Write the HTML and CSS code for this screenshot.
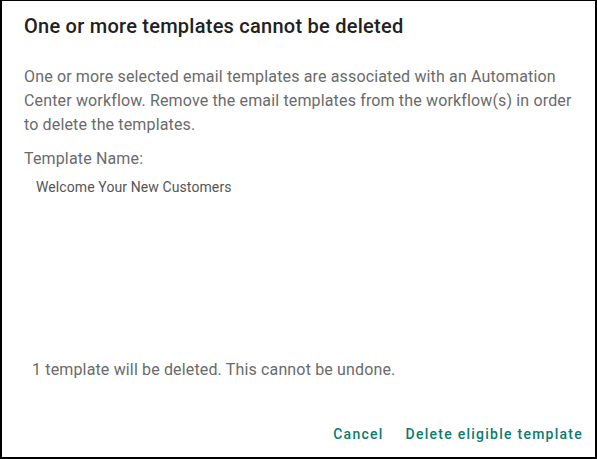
FILE: index.html
```html
<!DOCTYPE html>
<html>
<head>
<meta charset="utf-8">
<link rel="stylesheet" href="styles.css">
</head>
<body>
<div class="dialog">
  <h2 class="title">One or more templates cannot be deleted</h2>
  <div class="content">
    <p class="message">One or more selected email templates are associated with an Automation Center workflow. Remove the email templates from the workflow(s) in order to delete the templates.</p>
    <div class="label">Template Name:</div>
    <ul class="names">
      <li>Welcome Your New Customers</li>
    </ul>
    <div class="note">1 template will be deleted. This cannot be undone.</div>
  </div>
  <div class="actions">
    <button class="btn">Cancel</button>
    <button class="btn">Delete eligible template</button>
  </div>
</div>
</body>
</html>
```

FILE: styles.css
```css
* { box-sizing: border-box; }
html, body { margin: 0; padding: 0; background: #fff; }
body { font-family: Roboto, "Noto Sans", sans-serif; }
.dialog {
  width: 597px;
  height: 459px;
  border: 2px solid #000;
  border-top-width: 1px;
  display: flex;
  flex-direction: column;
}
.title {
  margin: 0;
  padding: 12px 22px 0;
  font-size: 20px;
  font-weight: 500;
  line-height: 26px;
  color: #212121;
  letter-spacing: 0.25px;
}
.content {
  flex: 1;
  padding: 26px 22px 0;
  display: flex;
  flex-direction: column;
}
.message {
  margin: 0;
  font-size: 16px;
  line-height: 24px;
  color: #6a6a6a;
  letter-spacing: 0.15px;
}
.label {
  margin-top: 10px;
  font-size: 16px;
  line-height: 24px;
  color: #6a6a6a;
  letter-spacing: 0.15px;
}
.names {
  list-style: none;
  margin: 5px 0 0;
  padding: 0 0 0 12px;
  font-size: 14px;
  line-height: 22px;
  color: #555;
  letter-spacing: 0.1px;
}
.note {
  margin-top: auto;
  margin-bottom: 34px;
  padding-left: 8px;
  font-size: 16px;
  line-height: 24px;
  color: #6a6a6a;
  letter-spacing: 0.15px;
}
.actions {
  display: flex;
  justify-content: flex-end;
  gap: 6px;
  padding: 0 4px 5px 0;
}
.btn {
  background: none;
  border: none;
  padding: 8px 8px;
  font-family: Roboto, sans-serif;
  font-size: 14px;
  font-weight: 500;
  letter-spacing: 1.25px;
  color: #0b7b6e;
  line-height: 20px;
}
```
